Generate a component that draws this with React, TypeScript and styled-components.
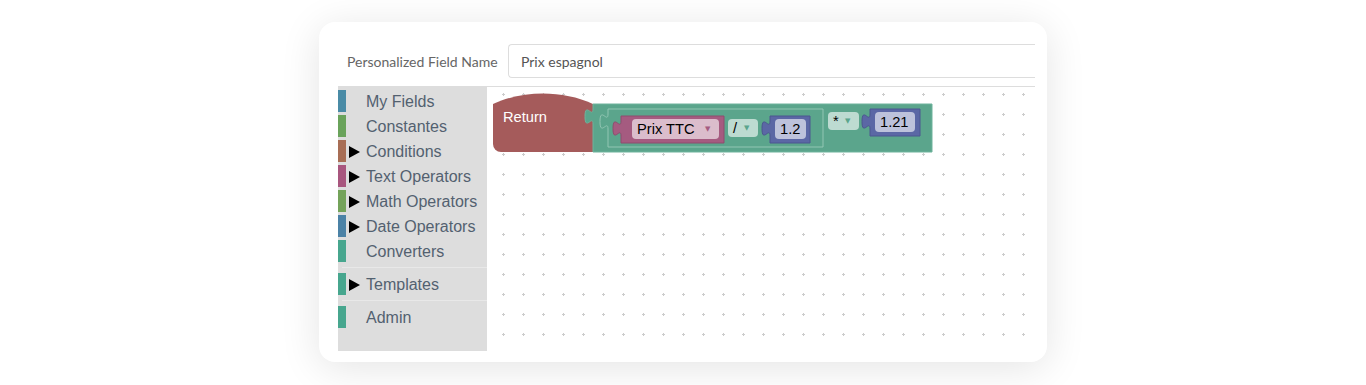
import React from "react";
import styled, { createGlobalStyle } from "styled-components";

const GlobalStyle = createGlobalStyle`
  html, body { margin: 0; padding: 0; background: #ffffff; }
  * { box-sizing: border-box; }
`;

const Page = styled.div`
  width: 1366px;
  height: 385px;
  padding-top: 22px;
  display: flex;
  justify-content: center;
  align-items: flex-start;
  background: #ffffff;
`;

const Card = styled.div`
  width: 728px;
  height: 340px;
  background: #ffffff;
  border-radius: 16px;
  box-shadow: 0 6px 40px rgba(0, 0, 0, 0.11);
  padding: 22px 12px 11px 19px;
  display: flex;
  flex-direction: column;
`;

const FieldRow = styled.div`
  display: flex;
  align-items: center;
  height: 34px;
`;

const FieldLabel = styled.label`
  width: 170px;
  padding-left: 9px;
  font-family: Lato, "Liberation Sans", sans-serif;
  font-size: 14px;
  color: #666666;
  white-space: nowrap;
`;

const FieldInput = styled.input`
  flex: 1;
  height: 34px;
  border: 1px solid #dddddd;
  border-right: none;
  border-radius: 4px 0 0 4px;
  padding: 0 12px;
  font-family: Lato, "Liberation Sans", sans-serif;
  font-size: 14px;
  color: #555555;
  background: #ffffff;
  outline: none;
`;

const Editor = styled.div`
  margin-top: 8px;
  height: 265px;
  border-top: 1px solid #dddddd;
  display: flex;
`;

const Toolbox = styled.div`
  width: 149px;
  background: #dddddd;
  padding-top: 3px;
  display: flex;
  flex-direction: column;
`;

const CategoryRow = styled.div`
  display: flex;
  align-items: center;
  height: 22px;
  margin-bottom: 3px;
`;

const Stripe = styled.span<{ $color: string }>`
  width: 8px;
  height: 22px;
  background: ${(p) => p.$color};
`;

const ExpandSlot = styled.span`
  width: 20px;
  height: 22px;
  display: flex;
  align-items: center;
  padding-left: 3px;
  padding-top: 1px;
`;

const Arrow = styled.span`
  width: 0;
  height: 0;
  border-left: 11px solid #000000;
  border-top: 6.5px solid transparent;
  border-bottom: 6.5px solid transparent;
`;

const CategoryLabel = styled.span`
  font-family: "Liberation Sans", Arial, sans-serif;
  font-size: 16px;
  line-height: 22px;
  padding-top: 2px;
  color: #536170;
  white-space: nowrap;
`;

const Separator = styled.div`
  margin: 2px 0 5px 4px;
  border-top: 1px solid #e8e8e8;
`;

const Workspace = styled.div`
  flex: 1;
  background: #ffffff;
  overflow: hidden;
`;

const WorkspaceSvg = styled.svg`
  display: block;
  width: 100%;
  height: 100%;
`;

const BlockText = styled.text<{ $light?: boolean }>`
  font-family: "Liberation Sans", Arial, sans-serif;
  font-size: 11pt;
  fill: ${(p) => (p.$light ? "#ffffff" : "#000000")};
`;

const DropArrow = styled.text<{ $color: string }>`
  font-family: "DejaVu Sans", "Liberation Sans", sans-serif;
  font-size: 7px;
  fill: ${(p) => p.$color};
`;

type Category = { name: string; color: string; expandable?: boolean };

const groups: Category[][] = [
  [
    { name: "My Fields", color: "#4a8ba6" },
    { name: "Constantes", color: "#6aa35b" },
    { name: "Conditions", color: "#a86e55", expandable: true },
    { name: "Text Operators", color: "#a8567e", expandable: true },
    { name: "Math Operators", color: "#74a35a", expandable: true },
    { name: "Date Operators", color: "#4b82a6", expandable: true },
    { name: "Converters", color: "#47a68e" },
  ],
  [{ name: "Templates", color: "#47a68e", expandable: true }],
  [{ name: "Admin", color: "#47a68e" }],
];

// Block outline with an output puzzle tab on its left side.
function blockPath(x: number, y: number, w: number, h: number, tabY = 5) {
  const t = y + tabY;
  return [
    `M${x},${y}`,
    `H${x + w}`,
    `V${y + h}`,
    `H${x}`,
    `V${t + 15}`,
    `C${x},${t + 5} ${x - 8},${t + 23} ${x - 8},${t + 7.5}`,
    `C${x - 8},${t - 8} ${x},${t + 10} ${x},${t}`,
    "Z",
  ].join(" ");
}

const TEAL = "#5ba58c";
const PINK = "#a55b80";
const BLUE = "#5b67a5";
const RED = "#a55b5b";

const Pill: React.FC<{
  x: number;
  y: number;
  w: number;
  h: number;
  fill: string;
  label: string;
  arrow?: string;
}> = ({ x, y, w, h, fill, label, arrow }) => (
  <g>
    <rect x={x} y={y} width={w} height={h} rx={4} ry={4} fill={fill} />
    <BlockText x={x + 5} y={y + h / 2 + 5}>
      {label}
    </BlockText>
    {arrow && (
      <DropArrow $color={arrow} x={x + w - 14} y={y + h / 2 + 2}>
        ▼
      </DropArrow>
    )}
  </g>
);

const Blocks: React.FC = () => (
  <g>
    {/* Return hat block */}
    <path
      d="M6,17 C36,3 76,3 106,17 V65 H14 A8,8 0 0 1 6,57 Z"
      fill={RED}
    />
    <BlockText $light x={16} y={35}>
      Return
    </BlockText>

    {/* outer multiplication block */}
    <path d={blockPath(106, 17, 339, 48, 5)} fill={TEAL} stroke="#6fb39c" strokeWidth={1} />

    {/* inner division block */}
    <path d={blockPath(121, 22, 215, 38, 5)} fill={TEAL} stroke="#92c6b3" strokeWidth={1} />

    {/* Prix TTC field block */}
    <path d={blockPath(134, 29, 103, 27, 5)} fill={PINK} stroke="#8f4c6e" strokeWidth={1} />
    <Pill x={145} y={32} w={87} h={20} fill="#dbbdcc" label="Prix TTC" arrow={PINK} />

    {/* "/" operator dropdown */}
    <Pill x={241} y={32} w={30} h={18} fill="#bddbd1" label="/" arrow={TEAL} />

    {/* 1.2 number block */}
    <path d={blockPath(283, 29, 40, 27, 5)} fill={BLUE} stroke="#4c5690" strokeWidth={1} />
    <Pill x={288} y={32} w={31} h={20} fill="#bdc2db" label="1.2" />

    {/* "*" operator dropdown */}
    <Pill x={341} y={25} w={31} h={18} fill="#bddbd1" label="*" arrow={TEAL} />

    {/* 1.21 number block */}
    <path d={blockPath(383, 22, 50, 27, 5)} fill={BLUE} stroke="#4c5690" strokeWidth={1} />
    <Pill x={388} y={25} w={40} h={20} fill="#bdc2db" label="1.21" />
  </g>
);

export default function App() {
  return (
    <>
      <GlobalStyle />
      <Page>
        <Card>
          <FieldRow>
            <FieldLabel>Personalized Field Name</FieldLabel>
            <FieldInput defaultValue="Prix espagnol" />
          </FieldRow>
          <Editor>
            <Toolbox>
              {groups.map((group, gi) => (
                <React.Fragment key={gi}>
                  {gi > 0 && <Separator />}
                  {group.map((c) => (
                    <CategoryRow key={c.name}>
                      <Stripe $color={c.color} />
                      <ExpandSlot>{c.expandable && <Arrow />}</ExpandSlot>
                      <CategoryLabel>{c.name}</CategoryLabel>
                    </CategoryRow>
                  ))}
                </React.Fragment>
              ))}
            </Toolbox>
            <Workspace>
              <WorkspaceSvg>
                <defs>
                  <pattern
                    id="blockly-grid"
                    patternUnits="userSpaceOnUse"
                    x={6}
                    y={-3}
                    width={20}
                    height={20}
                  >
                    <path d="M9,10.5 H12 M10.5,9 V12" stroke="#cccccc" strokeWidth={1} />
                  </pattern>
                </defs>
                <rect x={0} y={0} width="100%" height="100%" fill="url(#blockly-grid)" />
                <Blocks />
              </WorkspaceSvg>
            </Workspace>
          </Editor>
        </Card>
      </Page>
    </>
  );
}
